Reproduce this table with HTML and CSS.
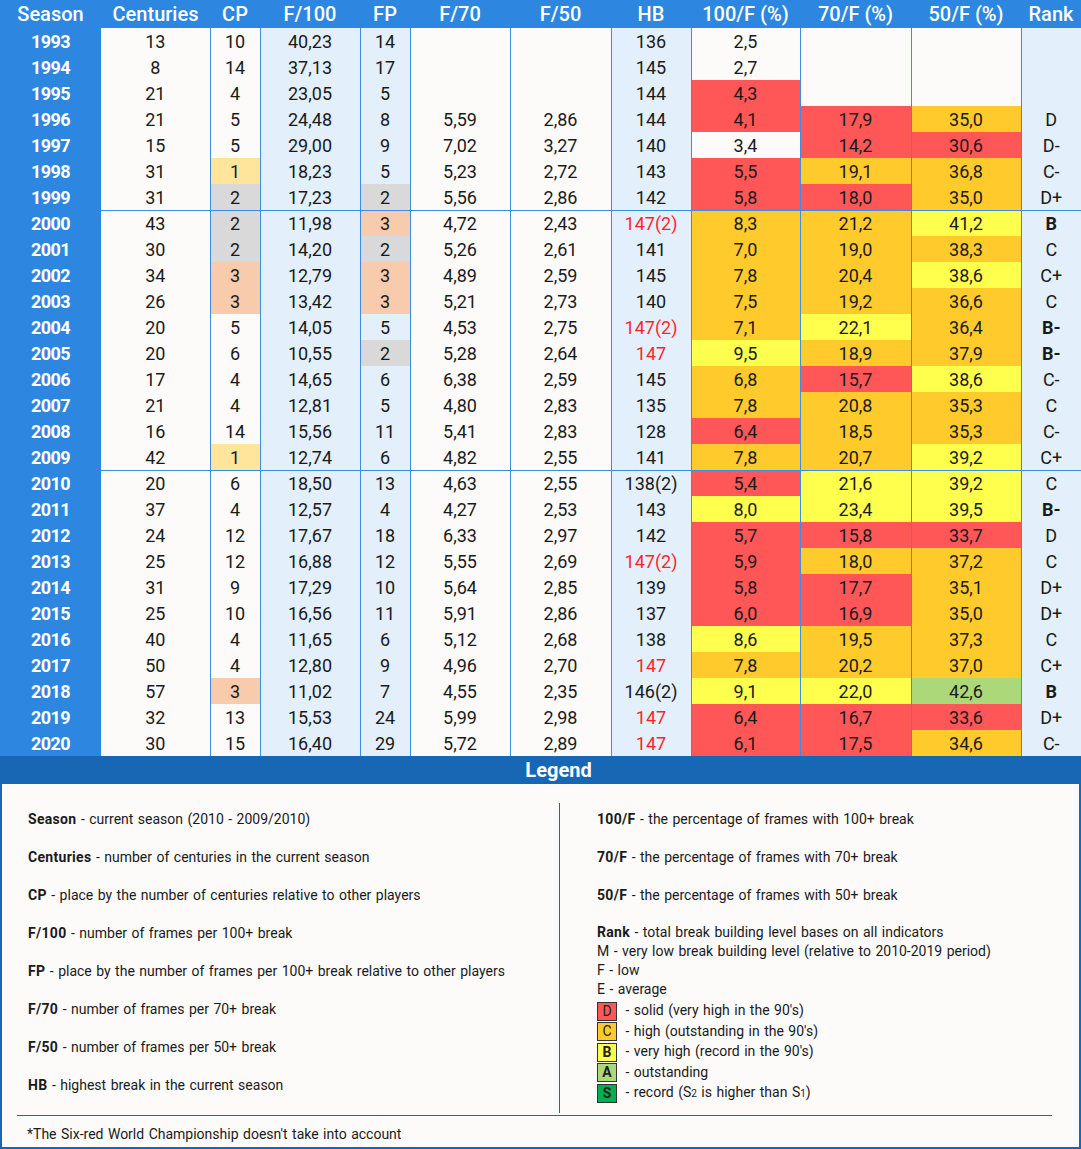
FILE: index.html
```html
<!DOCTYPE html>
<html lang="en">
<head>
  <meta charset="UTF-8" />
  <title>Break building statistics</title>
  <link rel="stylesheet" href="styles.css">
</head>
<body>
  <table class="stats">
    <colgroup>
      <col class="c-season"><col class="c-cent"><col class="c-cp"><col class="c-f100 light"><col class="c-fp light">
      <col class="c-f70"><col class="c-f50"><col class="c-hb light"><col class="c-p100"><col class="c-p70">
      <col class="c-p50"><col class="c-rank light">
    </colgroup>
    <thead>
      <tr>
        <th>Season</th><th>Centuries</th><th>CP</th><th>F/100</th><th>FP</th><th>F/70</th>
        <th>F/50</th><th>HB</th><th>100/F (%)</th><th>70/F (%)</th><th>50/F (%)</th><th>Rank</th>
      </tr>
    </thead>
    <tbody>
      <tr><th>1993</th><td>13</td><td>10</td><td>40,23</td><td>14</td><td></td><td></td><td>136</td><td>2,5</td><td></td><td></td><td></td></tr>
      <tr><th>1994</th><td>8</td><td>14</td><td>37,13</td><td>17</td><td></td><td></td><td>145</td><td>2,7</td><td></td><td></td><td></td></tr>
      <tr><th>1995</th><td>21</td><td>4</td><td>23,05</td><td>5</td><td></td><td></td><td>144</td><td class="red">4,3</td><td></td><td></td><td></td></tr>
      <tr><th>1996</th><td>21</td><td>5</td><td>24,48</td><td>8</td><td>5,59</td><td>2,86</td><td>144</td><td class="red">4,1</td><td class="red">17,9</td><td class="orange">35,0</td><td>D</td></tr>
      <tr><th>1997</th><td>15</td><td>5</td><td>29,00</td><td>9</td><td>7,02</td><td>3,27</td><td>140</td><td>3,4</td><td class="red">14,2</td><td class="red">30,6</td><td>D-</td></tr>
      <tr><th>1998</th><td>31</td><td class="first">1</td><td>18,23</td><td>5</td><td>5,23</td><td>2,72</td><td>143</td><td class="red">5,5</td><td class="orange">19,1</td><td class="orange">36,8</td><td>C-</td></tr>
      <tr><th>1999</th><td>31</td><td class="second">2</td><td>17,23</td><td class="second">2</td><td>5,56</td><td>2,86</td><td>142</td><td class="red">5,8</td><td class="red">18,0</td><td class="orange">35,0</td><td>D+</td></tr>
      <tr class="sep"><th>2000</th><td>43</td><td class="second">2</td><td>11,98</td><td class="third">3</td><td>4,72</td><td>2,43</td><td class="max">147(2)</td><td class="orange">8,3</td><td class="orange">21,2</td><td class="yellow">41,2</td><td class="top">B</td></tr>
      <tr><th>2001</th><td>30</td><td class="second">2</td><td>14,20</td><td class="second">2</td><td>5,26</td><td>2,61</td><td>141</td><td class="orange">7,0</td><td class="orange">19,0</td><td class="orange">38,3</td><td>C</td></tr>
      <tr><th>2002</th><td>34</td><td class="third">3</td><td>12,79</td><td class="third">3</td><td>4,89</td><td>2,59</td><td>145</td><td class="orange">7,8</td><td class="orange">20,4</td><td class="yellow">38,6</td><td>C+</td></tr>
      <tr><th>2003</th><td>26</td><td class="third">3</td><td>13,42</td><td class="third">3</td><td>5,21</td><td>2,73</td><td>140</td><td class="orange">7,5</td><td class="orange">19,2</td><td class="orange">36,6</td><td>C</td></tr>
      <tr><th>2004</th><td>20</td><td>5</td><td>14,05</td><td>5</td><td>4,53</td><td>2,75</td><td class="max">147(2)</td><td class="orange">7,1</td><td class="yellow">22,1</td><td class="orange">36,4</td><td class="top">B-</td></tr>
      <tr><th>2005</th><td>20</td><td>6</td><td>10,55</td><td class="second">2</td><td>5,28</td><td>2,64</td><td class="max">147</td><td class="yellow">9,5</td><td class="orange">18,9</td><td class="orange">37,9</td><td class="top">B-</td></tr>
      <tr><th>2006</th><td>17</td><td>4</td><td>14,65</td><td>6</td><td>6,38</td><td>2,59</td><td>145</td><td class="orange">6,8</td><td class="red">15,7</td><td class="yellow">38,6</td><td>C-</td></tr>
      <tr><th>2007</th><td>21</td><td>4</td><td>12,81</td><td>5</td><td>4,80</td><td>2,83</td><td>135</td><td class="orange">7,8</td><td class="orange">20,8</td><td class="orange">35,3</td><td>C</td></tr>
      <tr><th>2008</th><td>16</td><td>14</td><td>15,56</td><td>11</td><td>5,41</td><td>2,83</td><td>128</td><td class="red">6,4</td><td class="orange">18,5</td><td class="orange">35,3</td><td>C-</td></tr>
      <tr><th>2009</th><td>42</td><td class="first">1</td><td>12,74</td><td>6</td><td>4,82</td><td>2,55</td><td>141</td><td class="orange">7,8</td><td class="orange">20,7</td><td class="yellow">39,2</td><td>C+</td></tr>
      <tr class="sep"><th>2010</th><td>20</td><td>6</td><td>18,50</td><td>13</td><td>4,63</td><td>2,55</td><td>138(2)</td><td class="red">5,4</td><td class="yellow">21,6</td><td class="yellow">39,2</td><td>C</td></tr>
      <tr><th>2011</th><td>37</td><td>4</td><td>12,57</td><td>4</td><td>4,27</td><td>2,53</td><td>143</td><td class="yellow">8,0</td><td class="yellow">23,4</td><td class="yellow">39,5</td><td class="top">B-</td></tr>
      <tr><th>2012</th><td>24</td><td>12</td><td>17,67</td><td>18</td><td>6,33</td><td>2,97</td><td>142</td><td class="red">5,7</td><td class="red">15,8</td><td class="red">33,7</td><td>D</td></tr>
      <tr><th>2013</th><td>25</td><td>12</td><td>16,88</td><td>12</td><td>5,55</td><td>2,69</td><td class="max">147(2)</td><td class="red">5,9</td><td class="orange">18,0</td><td class="orange">37,2</td><td>C</td></tr>
      <tr><th>2014</th><td>31</td><td>9</td><td>17,29</td><td>10</td><td>5,64</td><td>2,85</td><td>139</td><td class="red">5,8</td><td class="red">17,7</td><td class="orange">35,1</td><td>D+</td></tr>
      <tr><th>2015</th><td>25</td><td>10</td><td>16,56</td><td>11</td><td>5,91</td><td>2,86</td><td>137</td><td class="red">6,0</td><td class="red">16,9</td><td class="orange">35,0</td><td>D+</td></tr>
      <tr><th>2016</th><td>40</td><td>4</td><td>11,65</td><td>6</td><td>5,12</td><td>2,68</td><td>138</td><td class="yellow">8,6</td><td class="orange">19,5</td><td class="orange">37,3</td><td>C</td></tr>
      <tr><th>2017</th><td>50</td><td>4</td><td>12,80</td><td>9</td><td>4,96</td><td>2,70</td><td class="max">147</td><td class="orange">7,8</td><td class="orange">20,2</td><td class="orange">37,0</td><td>C+</td></tr>
      <tr><th>2018</th><td>57</td><td class="third">3</td><td>11,02</td><td>7</td><td>4,55</td><td>2,35</td><td>146(2)</td><td class="yellow">9,1</td><td class="yellow">22,0</td><td class="green">42,6</td><td class="top">B</td></tr>
      <tr><th>2019</th><td>32</td><td>13</td><td>15,53</td><td>24</td><td>5,99</td><td>2,98</td><td class="max">147</td><td class="red">6,4</td><td class="red">16,7</td><td class="red">33,6</td><td>D+</td></tr>
      <tr><th>2020</th><td>30</td><td>15</td><td>16,40</td><td>29</td><td>5,72</td><td>2,89</td><td class="max">147</td><td class="red">6,1</td><td class="red">17,5</td><td class="orange">34,6</td><td>C-</td></tr>
    </tbody>
  </table>

  <div class="legend-bar">Legend</div>
  <div class="legend">
    <div class="legend-cols">
      <!-- Left column: table columns -->
      <div class="legend-col">
        <p class="item"><b>Season</b> - current season (2010 - 2009/2010)</p>
        <p class="item"><b>Centuries</b> - number of centuries in the current season</p>
        <p class="item"><b>CP</b> - place by the number of centuries relative to other players</p>
        <p class="item"><b>F/100</b> - number of frames per 100+ break</p>
        <p class="item"><b>FP</b> - place by the number of frames per 100+ break relative to other players</p>
        <p class="item"><b>F/70</b> - number of frames per 70+ break</p>
        <p class="item"><b>F/50</b> - number of frames per 50+ break</p>
        <p class="item"><b>HB</b> - highest break in the current season</p>
      </div>
      <!-- Right column: percentages and rank scale -->
      <div class="legend-col right">
        <p class="item"><b>100/F</b> - the percentage of frames with 100+ break</p>
        <p class="item"><b>70/F</b> - the percentage of frames with 70+ break</p>
        <p class="item"><b>50/F</b> - the percentage of frames with 50+ break</p>
        <div class="rank-list">
          <p class="line"><b>Rank</b> - total break building level bases on all indicators</p>
          <p class="line">M - very low break building level (relative to 2010-2019 period)</p>
          <p class="line">F - low</p>
          <p class="line">E - average</p>
          <div class="swatches">
            <p class="swatch-line"><span class="swatch red">D</span> - solid (very high in the 90's)</p>
            <p class="swatch-line"><span class="swatch orange">C</span> - high (outstanding in the 90's)</p>
            <p class="swatch-line"><span class="swatch yellow bold">B</span> - very high (record in the 90's)</p>
            <p class="swatch-line"><span class="swatch green bold">A</span> - outstanding</p>
            <p class="swatch-line"><span class="swatch deep-green bold">S</span> - record (S<small>2</small> is higher than S<small>1</small>)</p>
          </div>
        </div>
      </div>
    </div>
    <p class="footnote">*The Six-red World Championship doesn't take into account</p>
  </div>
</body>
</html>
```

FILE: styles.css
```css
body {
  margin: 0;
  font-family: Roboto, "Liberation Sans", sans-serif;
  background: #fcfbfa;
  color: #1a1a1a;
  width: 1081px;
}
.stats {
  border-collapse: collapse;
  table-layout: fixed;
  width: 1081px;
  background: #fcfbfa;
}
.c-season { width: 101px; }
.c-cent { width: 109px; }
.c-cp { width: 50px; }
.c-f100 { width: 100px; }
.c-fp { width: 50px; }
.c-f70 { width: 100px; }
.c-f50 { width: 101px; }
.c-hb { width: 80px; }
.c-p100 { width: 109px; }
.c-p70 { width: 111px; }
.c-p50 { width: 110px; }
.c-rank { width: 60px; }
col.light {
  background: #e3effb;
}
.stats th,
.stats td {
  padding: 0;
  text-align: center;
  white-space: nowrap;
}
.stats thead th {
  height: 28px;
  background: #2d87e0;
  color: #fff;
  font-size: 20px;
  font-weight: 500;
}
.stats tbody th {
  height: 26px;
  background: #2d87e0;
  color: #fff;
  font-size: 18px;
  font-weight: 700;
  letter-spacing: -0.6px;
}
.stats td {
  height: 26px;
  font-size: 18px;
  border-left: 1px solid #3a8ee6;
}
.stats th + td {
  border-left: none;
}
.stats tr.sep th,
.stats tr.sep td {
  height: 25px;
}
.stats tr.sep td {
  border-top: 1px solid #3a8ee6;
}
.stats td.red { background: #ff5757; }
.stats td.orange { background: #ffca2c; }
.stats td.yellow { background: #ffff4d; }
.stats td.green { background: #acd879; }
.stats td.first { background: #ffe59b; }
.stats td.second { background: #d9d9d9; }
.stats td.third { background: #f8cbad; }
.stats td.max { color: #ff1f2f; }
.stats td.top { font-weight: 700; }

.legend-bar {
  height: 28px;
  line-height: 28px;
  padding-left: 36px;
  background: #1767b5;
  color: #fff;
  text-align: center;
  font-size: 20px;
  font-weight: 700;
}
.legend {
  height: 365px;
  box-sizing: border-box;
  border: 2px solid #1767b5;
  border-top: none;
  padding: 19px 27px 0 15px;
}
.legend-cols {
  display: grid;
  grid-template-columns: 542px 1fr;
  height: 306px;
}
.legend-col {
  padding: 6px 0 0 11px;
}
.legend-col.right {
  border-left: 1px solid #1767b5;
  padding-left: 37px;
}
.legend p {
  margin: 0;
  font-size: 14px;
  word-spacing: 1px;
}
.legend b {
  letter-spacing: 0.3px;
}
.legend .item {
  line-height: 20px;
  margin-bottom: 18px;
}
.rank-list {
  margin-top: 1px;
}
.legend .line {
  line-height: 19px;
}
.swatches {
  margin-top: 1px;
}
.legend .swatch-line {
  height: 20.5px;
  line-height: 20.5px;
}
.swatch {
  display: inline-block;
  box-sizing: border-box;
  width: 20px;
  height: 19px;
  margin-right: 4px;
  border: 1px solid #333;
  line-height: 17px;
  text-align: center;
  vertical-align: middle;
  font-size: 14px;
  color: #222;
}
.swatch.bold { font-weight: 700; }
.swatch.red { background: #ff5757; }
.swatch.orange { background: #ffca2c; }
.swatch.yellow { background: #ffff4d; }
.swatch.green { background: #acd879; }
.swatch.deep-green { background: #00b050; }
.legend small {
  font-size: 10px;
  word-spacing: 0;
}
.legend .footnote {
  margin-top: 6px;
  border-top: 1px solid #1767b5;
  padding: 8px 0 0 10px;
  line-height: 20px;
}
```
